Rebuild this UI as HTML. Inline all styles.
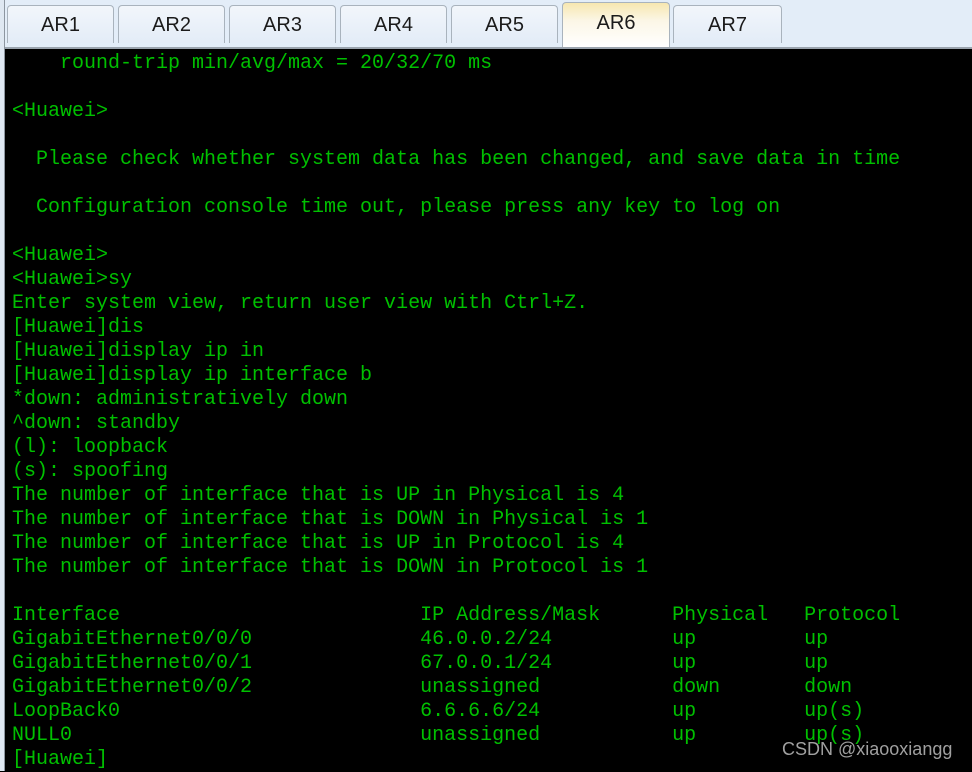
<!DOCTYPE html>
<html><head><meta charset="utf-8"><style>
html,body{margin:0;padding:0;width:972px;height:771px;overflow:hidden;background:#000}
.bar{position:absolute;left:0;top:0;width:972px;height:47px;background:#e3edf8;border-bottom:2px solid #9aa3ad}
.lb{position:absolute;left:0;top:0;width:4px;height:771px;background:#dfe8f2;border-right:1px solid #8d96a0}
.tab{position:absolute;top:5px;height:38px;width:107px;border:1px solid #a9b3bd;border-bottom:none;border-radius:4px 4px 0 0;background:linear-gradient(#f2f6fb,#e3ecf7);font:20px "Liberation Sans",sans-serif;color:#1b1b1b;text-align:center;line-height:38px;box-sizing:border-box}
.tab.act{top:2px;height:45px;background:linear-gradient(#f7e7b0,#fbf6e6 40%,#fff);line-height:40px;z-index:2}
pre{position:absolute;left:12px;top:52px;margin:0;font:20px/24px "Liberation Mono",monospace;color:#00c000}
.wm{position:absolute;left:782px;top:739px;font:18px "Liberation Sans",sans-serif;color:#a0a0a0}
</style></head><body>
<div class="bar"></div><div class="lb"></div>
<div class="tab" style="left:7px">AR1</div>
<div class="tab" style="left:118px">AR2</div>
<div class="tab" style="left:229px">AR3</div>
<div class="tab" style="left:340px">AR4</div>
<div class="tab" style="left:451px">AR5</div>
<div class="tab act" style="left:562px;width:108px">AR6</div>
<div class="tab" style="left:673px;width:109px">AR7</div>
<pre>    round-trip min/avg/max = 20/32/70 ms

&lt;Huawei&gt;

  Please check whether system data has been changed, and save data in time

  Configuration console time out, please press any key to log on

&lt;Huawei&gt;
&lt;Huawei&gt;sy
Enter system view, return user view with Ctrl+Z.
[Huawei]dis
[Huawei]display ip in
[Huawei]display ip interface b
*down: administratively down
^down: standby
(l): loopback
(s): spoofing
The number of interface that is UP in Physical is 4
The number of interface that is DOWN in Physical is 1
The number of interface that is UP in Protocol is 4
The number of interface that is DOWN in Protocol is 1

Interface                         IP Address/Mask      Physical   Protocol
GigabitEthernet0/0/0              46.0.0.2/24          up         up
GigabitEthernet0/0/1              67.0.0.1/24          up         up
GigabitEthernet0/0/2              unassigned           down       down
LoopBack0                         6.6.6.6/24           up         up(s)
NULL0                             unassigned           up         up(s)
[Huawei]</pre>
<div class="wm">CSDN @xiaooxiangg</div>
</body></html>
